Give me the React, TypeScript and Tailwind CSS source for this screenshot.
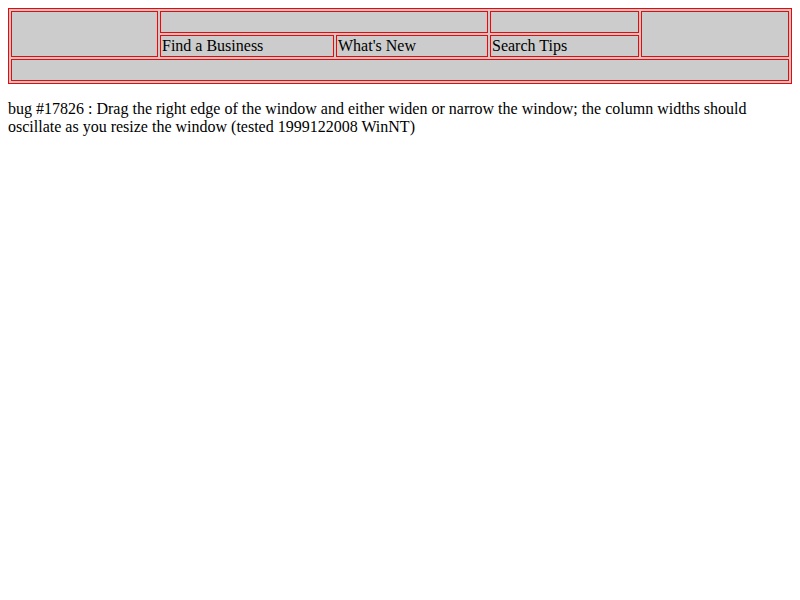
import React from 'react';

const cell = 'border border-[#ff0000] p-[1px] align-middle text-left';

export default function App() {
  return (
    <div className="min-h-screen bg-white p-2 text-black font-['Liberation_Serif',serif] text-base leading-[18px]">
      <table className="w-[784px] table-fixed border-separate border-spacing-[2px] border border-[#ff0000] bg-[#cccccc]">
        <colgroup>
          <col className="w-[147px]" />
          <col className="w-[174px]" />
          <col className="w-[152px]" />
          <col className="w-[149px]" />
          <col className="w-[148px]" />
        </colgroup>
        <tbody>
          <tr className="h-[22px]">
            <td rowSpan={2} className={cell}>&nbsp;</td>
            <td colSpan={2} className={cell}>&nbsp;</td>
            <td className={cell}>&nbsp;</td>
            <td rowSpan={2} className={cell}>&nbsp;</td>
          </tr>
          <tr className="h-[22px]">
            <td className={cell}>Find a Business</td>
            <td className={cell}>What's New</td>
            <td className={cell}>Search Tips</td>
          </tr>
          <tr className="h-[22px]">
            <td colSpan={5} className={cell}>&nbsp;</td>
          </tr>
        </tbody>
      </table>
      <p className="mt-4">
        bug #17826 : Drag the right edge of the window and either widen or narrow the window; the column widths should
        oscillate as you resize the window (tested 1999122008 WinNT)
      </p>
    </div>
  );
}
